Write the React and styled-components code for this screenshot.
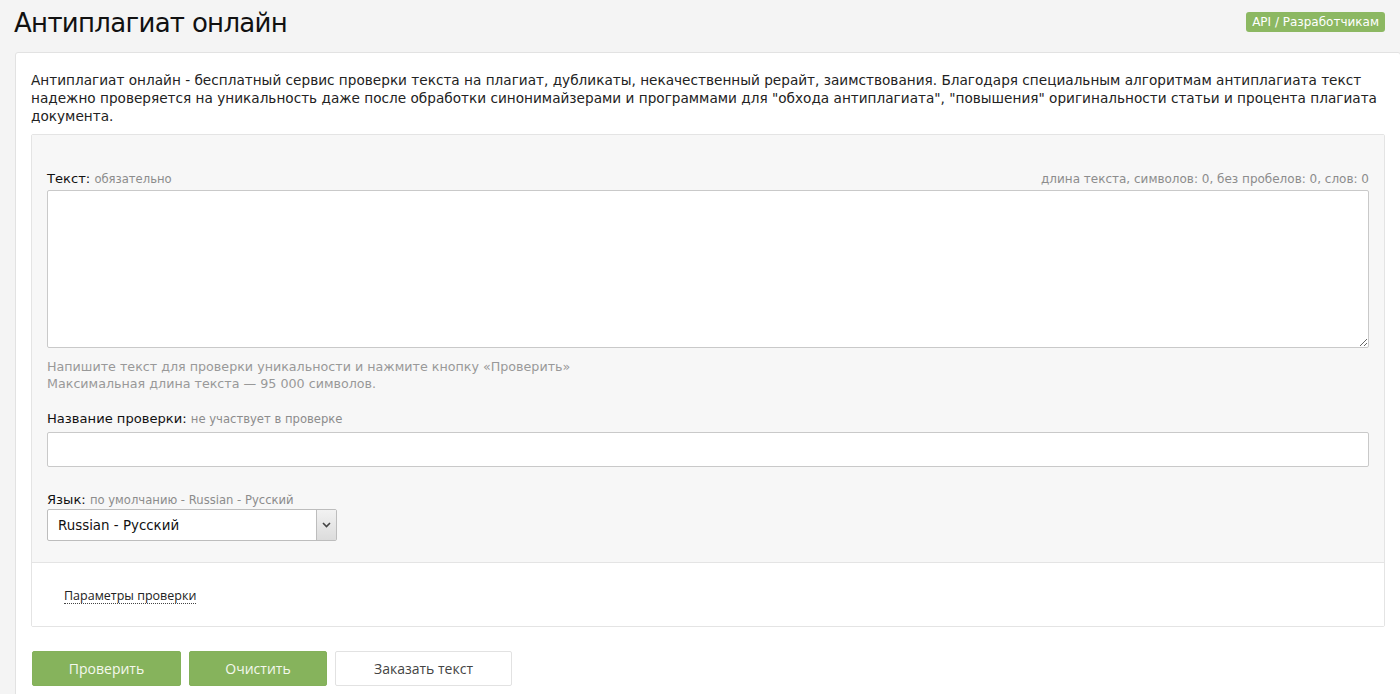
import styled, { createGlobalStyle } from 'styled-components';

const GlobalStyle = createGlobalStyle`
  body {
    margin: 0;
    background: #f4f4f4;
    font-family: "DejaVu Sans", Verdana, sans-serif;
    color: #222;
    overflow: hidden;
  }
`;

export default function App() {
  return (
    <Page>
      <GlobalStyle />
      <Header>
        <Title>Антиплагиат онлайн</Title>
        <ApiBadge href="#">API / Разработчикам</ApiBadge>
      </Header>
      <Panel>
        <Intro>
          Антиплагиат онлайн - бесплатный сервис проверки текста на плагиат, дубликаты, некачественный рерайт,
          заимствования. Благодаря специальным алгоритмам антиплагиата текст надежно проверяется на уникальность даже
          после обработки синонимайзерами и программами для "обхода антиплагиата", "повышения" оригинальности статьи и
          процента плагиата документа.
        </Intro>
        <FormBox>
          <FormBody>
            <LabelRow>
              <Label>
                Текст: <Note>обязательно</Note>
              </Label>
              <Counter>длина текста, символов: 0, без пробелов: 0, слов: 0</Counter>
            </LabelRow>
            <TextArea />
            <Hint>
              Напишите текст для проверки уникальности и нажмите кнопку «Проверить»
              <br />
              Максимальная длина текста — 95 000 символов.
            </Hint>

            <LabelRow $top={17}>
              <Label>
                Название проверки: <Note>не участвует в проверке</Note>
              </Label>
            </LabelRow>
            <TextInput />

            <LabelRow $top={23}>
              <Label>
                Язык: <Note>по умолчанию - Russian - Русский</Note>
              </Label>
            </LabelRow>
            <SelectBox>
              <Select defaultValue="ru">
                <option value="ru">Russian - Русский</option>
              </Select>
              <ArrowBox>
                <svg width="9" height="6" viewBox="0 0 9 6">
                  <path d="M1 1l3.5 3.5L8 1" fill="none" stroke="#444" strokeWidth="1.6" />
                </svg>
              </ArrowBox>
            </SelectBox>
          </FormBody>
          <FormFooter>
            <ParamsLink href="#">Параметры проверки</ParamsLink>
          </FormFooter>
        </FormBox>
        <Buttons>
          <Button $w={149} $primary>Проверить</Button>
          <Button $w={138} $primary>Очистить</Button>
          <Button $w={177}>Заказать текст</Button>
        </Buttons>
      </Panel>
    </Page>
  );
}

const Page = styled.div`
  padding: 0 0 0 15px;
  height: 694px;
`;

const Header = styled.div`
  display: flex;
  align-items: flex-start;
  justify-content: space-between;
  width: 1370px;
  height: 52px;
`;

const Title = styled.h1`
  margin: 6px 0 0 -1px;
  font-size: 26px;
  font-weight: normal;
  letter-spacing: -0.7px;
  line-height: 34px;
  color: #111;
`;

const ApiBadge = styled.a`
  margin-top: 12px;
  padding: 0 6px;
  height: 20px;
  line-height: 20px;
  background: #8cb862;
  border-radius: 3px;
  color: #fff;
  font-size: 12px;
  text-decoration: none;
`;

const Panel = styled.div`
  width: 1354px;
  background: #fff;
  border: 1px solid #e2e2e2;
  border-radius: 3px;
  padding: 18px 15px 30px 15px;
`;

const Intro = styled.p`
  margin: 0 0 9px;
  font-size: 13.65px;
  line-height: 18px;
  color: #222;
`;

const FormBox = styled.div`
  border: 1px solid #e4e4e4;
  border-radius: 2px;
`;

const FormBody = styled.div`
  background: #f7f7f7;
  padding: 34px 15px 21px 15px;
`;

const LabelRow = styled.div`
  display: flex;
  align-items: baseline;
  justify-content: space-between;
  margin-top: ${p => p.$top || 0}px;
  height: 20px;
  line-height: 20px;
`;

const Label = styled.span`
  font-size: 13.1px;
  color: #111;
`;

const Note = styled.span`
  font-size: 11.6px;
  color: #8c8c8c;
`;

const Counter = styled.span`
  font-size: 12px;
  color: #8c8c8c;
`;

const TextArea = styled.textarea`
  display: block;
  box-sizing: border-box;
  width: 100%;
  height: 158px;
  margin-top: 1px;
  border: 1px solid #c9c9c9;
  border-radius: 2px;
  background: #fff;
  resize: vertical;
`;

const Hint = styled.div`
  margin-top: 10px;
  font-size: 12.7px;
  line-height: 17px;
  color: #999;
`;

const TextInput = styled.input`
  display: block;
  box-sizing: border-box;
  width: 100%;
  height: 35px;
  margin-top: 3px;
  border: 1px solid #c9c9c9;
  border-radius: 2px;
  background: #fff;
`;

const SelectBox = styled.div`
  display: flex;
  width: 290px;
  height: 32px;
  margin-top: -1px;
  box-sizing: border-box;
  border: 1px solid #bdbdbd;
  border-radius: 2px;
  background: #fff;
`;

const Select = styled.select`
  flex: 1;
  appearance: none;
  border: none;
  background: transparent;
  padding: 0 10px;
  font-family: "DejaVu Sans", Verdana, sans-serif;
  font-size: 13.4px;
  color: #111;
  outline: none;
`;

const ArrowBox = styled.div`
  width: 19px;
  display: flex;
  align-items: center;
  justify-content: center;
  border-left: 1px solid #bdbdbd;
  background: linear-gradient(#f2f2f2, #dcdcdc);
`;

const FormFooter = styled.div`
  display: flex;
  align-items: center;
  height: 63px;
  padding-left: 32px;
  border-top: 1px solid #e4e4e4;
  background: #fff;
`;

const ParamsLink = styled.a`
  margin-top: 2px;
  font-family: "Open Sans", sans-serif;
  font-size: 12.5px;
  color: #222;
  text-decoration: none;
  border-bottom: 1px dotted #444;
  line-height: 15px;
`;

const Buttons = styled.div`
  display: flex;
  gap: 8px;
  margin-top: 24px;
  margin-left: 1px;
`;

const Button = styled.button`
  width: ${p => p.$w}px;
  height: 35px;
  border-radius: 2px;
  border: 1px solid ${p => (p.$primary ? '#84b15a' : '#e2e2e2')};
  background: ${p => (p.$primary ? '#86b35c' : '#fff')};
  color: ${p => (p.$primary ? '#f4f8ee' : '#444')};
  font-family: "Open Sans", sans-serif;
  font-size: 14px;
  cursor: pointer;
`;
